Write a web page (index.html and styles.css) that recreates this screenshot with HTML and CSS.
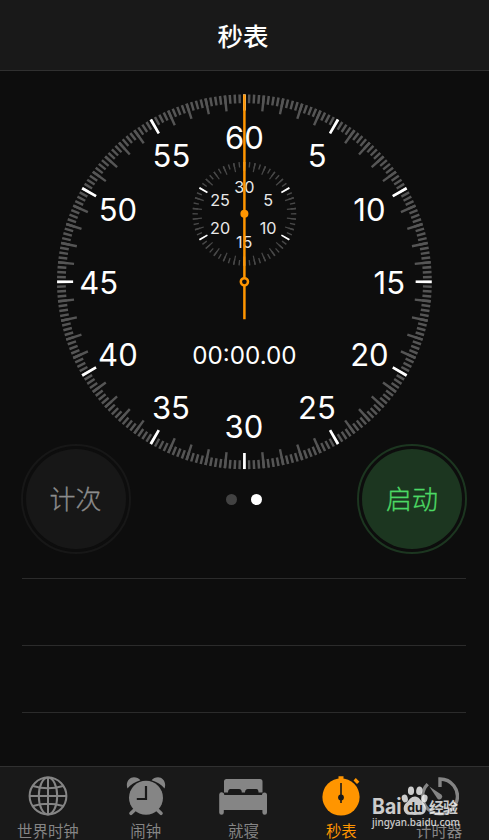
FILE: index.html
```html
<!DOCTYPE html>
<html lang="zh-CN">
<head>
<meta charset="utf-8">
<title>秒表</title>
<link rel="stylesheet" href="styles.css">
</head>
<body>
<div class="app">
  <header class="header"><h1 class="title">秒表</h1></header>
  <main class="main">
    <svg class="dial" viewBox="-190.4 -189.8 380 380">
      <g class="ticks" transform="rotate(-90)">
        <circle class="tick-short" r="183" pathLength="28800"/>
        <circle class="tick-long" r="179.3" pathLength="28800"/>
        <circle class="tick-major" r="179.3" pathLength="28800"/>
      </g>
      <g class="numbers">
        <text x="0" y="-133.2">60</text>
        <text x="72.7" y="-114.5">5</text>
        <text x="125" y="-61">10</text>
        <text x="144.9" y="11.8">15</text>
        <text x="125" y="84">20</text>
        <text x="72.5" y="137.4">25</text>
        <text x="-.5" y="156.4">30</text>
        <text x="-73.5" y="137.4">35</text>
        <text x="-126.5" y="84">40</text>
        <text x="-145.7" y="11.8">45</text>
        <text x="-126.5" y="-61">50</text>
        <text x="-73" y="-114.5">55</text>
      </g>
      <g transform="translate(0 -68)">
        <g class="ticks" transform="rotate(-90)">
          <circle class="sub-short" r="49.2" pathLength="3600"/>
          <circle class="sub-long" r="47.3" pathLength="3600"/>
          <circle class="sub-major" r="47.3" pathLength="3600"/>
        </g>
        <g class="sub-numbers">
          <text x="0" y="-21.1">30</text>
          <text x="23.8" y="-7.6">5</text>
          <text x="23.8" y="19.8">10</text>
          <text x="-.3" y="34.4">15</text>
          <text x="-24.3" y="19.8">20</text>
          <text x="-24.3" y="-7.6">25</text>
        </g>
      </g>
      <text class="time" x="0" y="82.2">00:00.00</text>
      <g class="hand">
        <path d="M0-187.3V-4M0 4V37.5"/>
        <circle class="pivot" cy="-68" r="4"/>
        <circle r="3.6"/>
      </g>
    </svg>
    <div class="controls">
      <button class="round lap"><span>计次</span></button>
      <div class="pages"><i></i><i class="current"></i></div>
      <button class="round start"><span>启动</span></button>
    </div>
    <ul class="laps"><li></li><li></li><li></li></ul>
  </main>
  <nav class="tabs">
    <a class="tab">
      <svg class="icon" viewBox="0 0 40 40"><g fill="none" stroke="currentColor" stroke-width="2"><circle cx="20" cy="20" r="18.4"/><ellipse cx="20" cy="20" rx="9.2" ry="18.4"/><path d="M20 1.6v36.8M1.6 20h36.8M5 10q15 4.500 30 0M5 30q15-4.500 30 0"/></g></svg>
      <span>世界时钟</span>
    </a>
    <a class="tab">
      <svg class="icon" viewBox="0 0 40 40"><g fill="currentColor"><path d="M1.500 12.500C-.8 6.500 3.200 1.300 8 1.300c2.500 0 5 1 6.400 3C9 6 4.500 8.800 1.500 12.500ZM38.500 12.500C40.800 6.500 36.800 1.300 32 1.300c-2.500 0-5 1-6.400 3C31 6 35.500 8.800 38.500 12.500Z"/><circle cx="20" cy="21.800" r="17"/></g><path d="M8.500 34 5 37.300M31.500 34 35 37.300" stroke="currentColor" stroke-width="3.600" stroke-linecap="round"/><path d="M20 10V23H10.800" fill="none" stroke="#191919" stroke-width="2.200"/></svg>
      <span>闹钟</span>
    </a>
    <a class="tab">
      <svg class="icon bed" viewBox="0 0 48 40"><path fill="currentColor" d="M5 18V5.500Q5 3 7.500 3H41Q43.500 3 43.500 5.500V16.500H39.500Q39.500 13 37.500 13H29Q26 13 26 16.500H22.800Q22.800 13 20 13H11.500Q9 13 9 16.500H5ZM.2 18.500a2.500 2.500 0 0 1 5 .5H43a2.500 2.500 0 0 1 5 0V36.500a2.300 2.300 0 0 1-4.600 0V34H4.800V36.500a2.300 2.300 0 0 1-4.600 0Z"/></svg>
      <span>就寝</span>
    </a>
    <a class="tab active">
      <svg class="icon" viewBox="0 0 40 40"><circle cx="20" cy="21" r="18.600" fill="currentColor"/><path d="M17.500.3h5v4h-5ZM32.500 4.500l2.300-2.400 3.600 3.600-2.400 2.400Z" fill="currentColor"/><path d="M20 7V27" stroke="#191919" stroke-width="1.600"/><circle cx="20" cy="21.500" r="2.900" fill="#191919"/></svg>
      <span>秒表</span>
    </a>
    <a class="tab">
      <svg class="icon" viewBox="0 0 40 40"><path d="M21 11V3a17.400 17.400 0 1 1-12.300 5.100" fill="none" stroke="currentColor" stroke-width="3.400"/><path d="m10.300 10.600 12.300 8.200a2.900 2.900 0 0 1-3.900 4.200Z" fill="currentColor"/></svg>
      <span>计时器</span>
    </a>
    <div class="watermark">
      <svg viewBox="0 0 92 46">
        <text class="brand" x="0" y="33.700" textLength="29.500" lengthAdjust="spacingAndGlyphs">Bai</text>
        <g><ellipse cx="32.800" cy="18.500" rx="3" ry="3.900" transform="rotate(-15 32.800 18.500)"/><ellipse cx="39" cy="10.800" rx="3.100" ry="4.300"/><ellipse cx="47.300" cy="10.800" rx="3.100" ry="4.300" transform="rotate(8 47.300 10.800)"/><ellipse cx="52.500" cy="18.500" rx="3" ry="4" transform="rotate(15 52.500 18.500)"/><path d="M43 16.500c4 0 5.500 3.800 8 6 4.500 3.700 4 12-2.500 12.300-3.500.2-8 .2-11 0-6.500-.3-7.500-8.500-3.200-12.100 3-2.600 4.700-6.200 8.700-6.200Z"/></g>
        <text class="du" x="35.300" y="32" textLength="15.500" lengthAdjust="spacingAndGlyphs">du</text>
        <text class="exp" x="57" y="33.200" textLength="29">经验</text>
        <text class="url" x="0" y="45.500" textLength="88" lengthAdjust="spacingAndGlyphs">jingyan.baidu.com</text>
      </svg>
    </div>
  </nav>
</div>
</body>
</html>
```
FILE: styles.css
```css
* { box-sizing: border-box; }

body {
  margin: 0;
  background: #0d0d0d;
  color: #fff;
  font-family: Inter, "Noto Sans CJK SC", sans-serif;
}

.app {
  display: flex;
  flex-direction: column;
  height: 840px;
  overflow: hidden;
}

.header {
  flex: none;
  height: 71px;
  background: #191919;
  border-bottom: 1px solid #303030;
  text-align: center;
}

.title {
  margin: 0;
  padding-right: 3px;
  font: 500 25.5px/70px "Noto Sans CJK SC", sans-serif;
}

.main {
  flex: 1;
  min-height: 0;
  display: flex;
  flex-direction: column;
}

.dial {
  flex: none;
  display: block;
  width: 380px;
  height: 380px;
  margin: 21px 0 0 54px;
}

.ticks circle { fill: none; }

.tick-short {
  stroke: #555;
  stroke-width: 8.800;
  stroke-dasharray: 62 58;
  stroke-dashoffset: 31;
}

.tick-long {
  stroke: #555;
  stroke-width: 16;
  stroke-dasharray: 64 416;
  stroke-dashoffset: 32;
}

.tick-major {
  stroke: #fff;
  stroke-width: 16;
  stroke-dasharray: 70 2330;
  stroke-dashoffset: 35;
}

.sub-short {
  stroke: #484848;
  stroke-width: 5.400;
  stroke-dasharray: 16 44;
  stroke-dashoffset: 8;
}

.sub-long {
  stroke: #484848;
  stroke-width: 9.200;
  stroke-dasharray: 16 104;
  stroke-dashoffset: 8;
}

.sub-major {
  stroke: #fff;
  stroke-width: 9.200;
  stroke-dasharray: 20 580;
  stroke-dashoffset: 10;
}

.dial text { fill: #fff; text-anchor: middle; }
.numbers { font-size: 31px; }
.dial .sub-numbers text { font-size: 16.200px; fill: #e8e8e8; }
.time { font-size: 24.200px; }

.hand { fill: none; stroke: #ff9500; stroke-width: 2.500; }
.hand .pivot { fill: #ff9500; stroke: none; }

.controls {
  display: flex;
  flex: none;
  justify-content: space-between;
  align-items: center;
  height: 110px;
  margin: -28px 22px 0 20.500px;
}

.round {
  width: 110px;
  height: 110px;
  padding: 3px;
  border: 2.500px solid;
  border-radius: 50%;
  background: none;
  font: 300 26px/1 "Noto Sans CJK SC", sans-serif;
  -webkit-text-stroke: .3px;
}

.round span {
  display: flex;
  align-items: center;
  justify-content: center;
  width: 100%;
  height: 100%;
  border-radius: 50%;
  padding-bottom: 2px;
}

.lap { border-color: #171717; }
.lap span { background: #171717; color: #8c8c8c; }
.start { border-color: #1c3620; }
.start span { background: #1c3620; color: #4cd964; }

.pages { display: flex; gap: 14px; }
.pages i { width: 11px; height: 11px; border-radius: 50%; background: #424242; }
.pages .current { background: #fff; }

.laps {
  margin: 24px 23px 0 22px;
  padding: 0;
  list-style: none;
}
.laps li { height: 67px; border-top: 1px solid #2b2b2b; }
.laps li:last-child { height: 53px; }

.tabs {
  position: relative;
  flex: none;
  display: grid;
  grid-template-columns: repeat(5, 1fr);
  height: 74px;
  background: #191919;
  border-top: 1px solid #303030;
}

.tab {
  display: flex;
  flex-direction: column;
  align-items: center;
  padding: 9px 2px 0 0;
  color: #858585;
  font: 400 15.400px/20px "Noto Sans CJK SC", sans-serif;
}
.tab span { margin-top: 4px; white-space: nowrap; }
.icon { width: 40px; height: 40px; }
.icon.bed { width: 48px; }
.active { color: #ff9500; }

.watermark {
  position: absolute;
  left: 372px;
  top: 13px;
  width: 92px;
  height: 46px;
  opacity: .78;
}
.watermark svg { display: block; overflow: visible; fill: #fff; }
.brand { font: 700 21px Inter, sans-serif; }
.du { font: 700 12.500px Inter, sans-serif; fill: #191919; }
.exp { font: 700 15px "Noto Sans CJK SC", sans-serif; }
.url { font: 500 10.500px "Noto Sans", sans-serif; }
```
